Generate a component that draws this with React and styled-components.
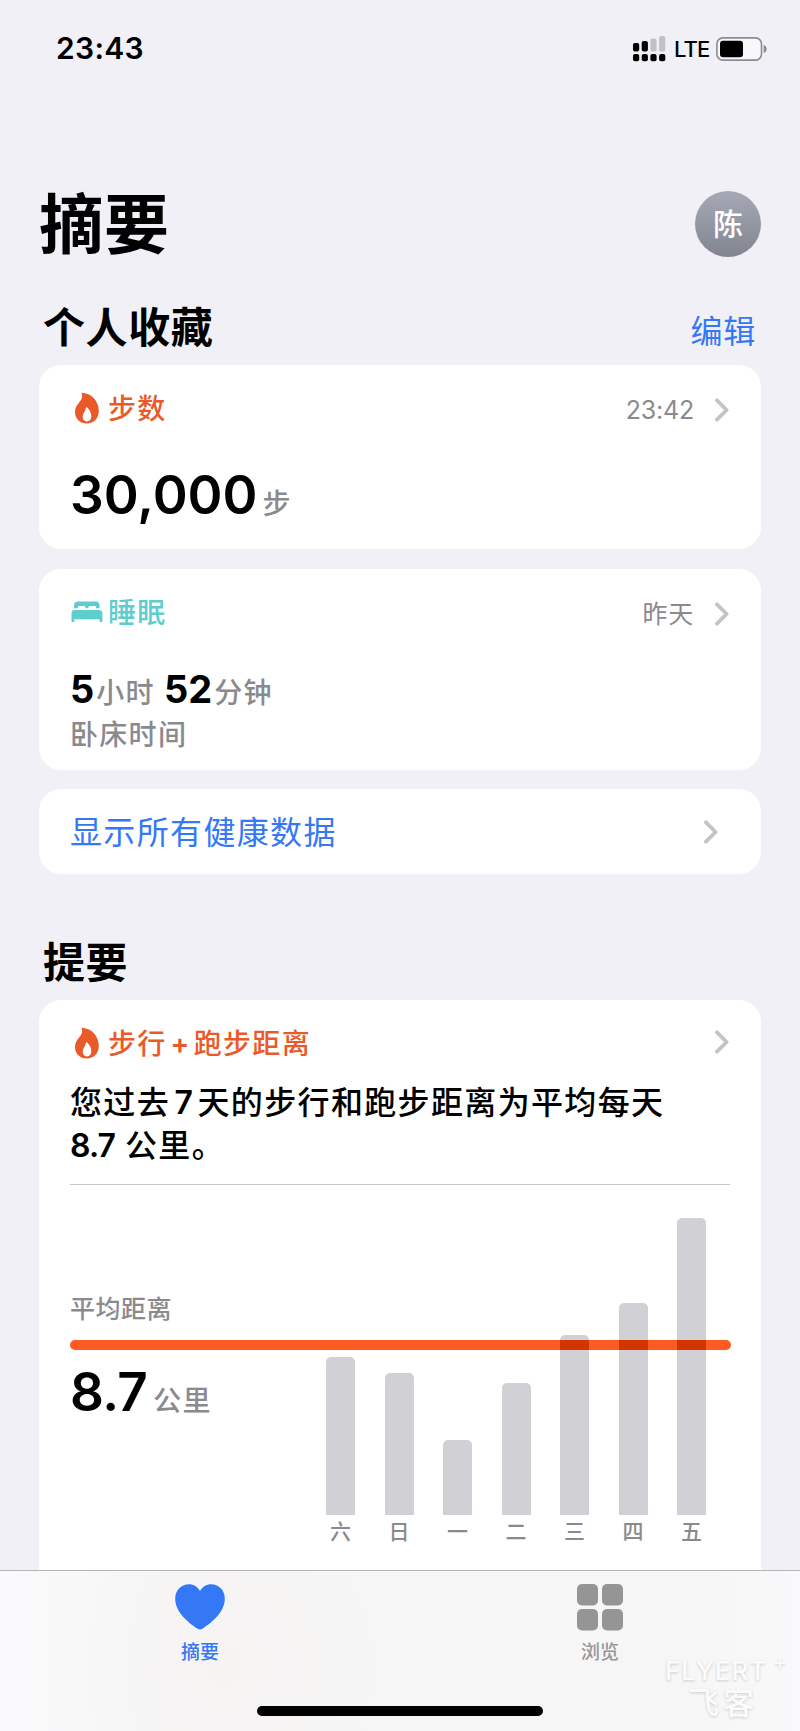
import React from 'react';
import styled, { createGlobalStyle } from 'styled-components';

const GlobalStyle = createGlobalStyle`
  * {
    box-sizing: border-box;
  }

  body {
    margin: 0;
    background: #f1f0f6;
    font-family: Inter, "Noto Sans CJK SC", sans-serif;
    color: #000;
  }
`

const Page = styled.div`
  position: relative;
  display: flex;
  flex-direction: column;
  width: 800px;
  height: 1731px;
  overflow: hidden;
`

const StatusBar = styled.div`
  display: flex;
  align-items: center;
  justify-content: space-between;
  height: 97px;
  padding: 0 33px 0 56px;
`

const Clock = styled.div`
  margin-top: -2px;
  font-size: 30px;
  font-weight: 600;
  letter-spacing: 0.3px;
`

const StatusIcons = styled.div`
  display: flex;
  align-items: center;

  svg {
    flex: none;
  }
`

const Network = styled.span`
  width: 49px;
  padding-left: 8px;
  font-size: 22px;
  font-weight: 500;
  letter-spacing: -0.9px;
`

const Content = styled.div`
  flex: 1;
  min-height: 0;
  padding: 0 39px;
  overflow: hidden;
`

const Header = styled.div`
  display: flex;
  align-items: center;
  justify-content: space-between;
  height: 66px;
  margin-top: 94px;
`

const Title = styled.h1`
  margin: 2px 0 0;
  font-size: 65px;
  font-weight: 700;
  line-height: 66px;
`

const Avatar = styled.div`
  width: 66px;
  height: 66px;
  border-radius: 50%;
  background: linear-gradient(#a5a9b5, #82858f);
  color: #fff;
  font-size: 30px;
  font-weight: 500;
  line-height: 67px;
  text-align: center;
`

const SectionRow = styled.div`
  display: flex;
  align-items: center;
  justify-content: space-between;
  height: 76px;
  margin-top: ${props => props.$gap}px;
  padding: 0 5px 0 4px;
`

const SectionTitle = styled.h2`
  margin: 2px 0 0;
  font-size: 42px;
  font-weight: 600;
  line-height: 60px;
  letter-spacing: 0.6px;
`

const EditLink = styled.a`
  margin-top: 4px;
  color: #3478f6;
  font-size: 32px;
  letter-spacing: 0.8px;
`

const Card = styled.section`
  height: ${props => props.$height}px;
  margin-bottom: ${props => props.$gap || 0}px;
  padding: 0 31px;
  border-radius: ${props => (props.$open ? '22px 22px 0 0' : '22px')};
  background: #fff;
`

const CardHeader = styled.div`
  display: flex;
  align-items: center;
  height: 86px;
`

const CardIcon = styled.span`
  display: flex;
  width: 38px;
`

const CardLabel = styled.span`
  flex: 1;
  margin-top: -2px;
  color: ${props => props.$color};
  font-size: 28px;
  font-weight: 500;
  letter-spacing: 1.3px;
`

const Plus = styled.span`
  margin: 0 3px 0 4px;
  font-weight: 600;
`

const CardTime = styled.span`
  margin: ${props => props.$shift}px 21px 0 0;
  color: #8a8a8e;
  font-size: 25px;
  letter-spacing: ${props => props.$spacing}px;
`

const ChevronSlot = styled.span`
  display: flex;
  margin: ${props => props.$shift || 0}px 1px 0 0;
`

const ValueRow = styled.div`
  display: flex;
  align-items: baseline;
  height: ${props => props.$height}px;
  margin-top: ${props => props.$top}px;
  line-height: ${props => props.$height}px;
`

const Value = styled.span`
  font-size: ${props => (props.$small ? 38 : 53)}px;
  font-weight: ${props => (props.$small ? 700 : 600)};
  letter-spacing: ${props => props.$spacing || 0}px;
`

const Unit = styled.span`
  margin: 0 ${props => props.$after || 0}px 0 ${props => props.$before}px;
  color: #8a8a8e;
  font-size: 28px;
  font-weight: 500;
  letter-spacing: 1.3px;
`

const Caption = styled.div`
  margin-top: 2px;
  color: #8a8a8e;
  font-size: 28px;
  font-weight: 500;
  line-height: 45px;
  letter-spacing: 1.3px;
`

const LinkCard = styled(Card)`
  display: flex;
  align-items: center;
  justify-content: space-between;
  padding-right: 42px;
`

const LinkText = styled.a`
  margin-top: -4px;
  color: #3478f6;
  font-size: 32px;
  letter-spacing: 1.35px;
`

const Summary = styled.p`
  height: 97px;
  margin: -5px 0 0;
  font-size: 32px;
  font-weight: 500;
  line-height: 43px;
  letter-spacing: 1.35px;
`

const SummaryNumber = styled.span`
  margin: 0 ${props => props.$gap || 0}px;
  font-weight: 600;
  letter-spacing: 0;
`

const SummaryValue = styled.span`
  font-weight: 600;
  letter-spacing: -0.9px;
`

const Divider = styled.hr`
  height: 1px;
  margin: 6px 0 0;
  border: 0;
  background: #c6c6c8;
`

const Chart = styled.div`
  position: relative;
  display: flex;
  justify-content: space-between;
  height: 385px;
`

const AverageLine = styled.div`
  position: absolute;
  top: 155px;
  left: 0;
  width: 661px;
  height: 10px;
  border-radius: 5px;
  background: #ff5a22;
`

const Average = styled.div`
  padding-top: 105px;
`

const AverageLabel = styled.div`
  color: #8a8a8e;
  font-size: 25px;
  font-weight: 500;
  line-height: 38px;
  letter-spacing: 0.5px;
`

const Bars = styled.div`
  position: relative;
  display: flex;
  align-items: flex-end;
  gap: 29.5px;
  height: 360px;
  margin-right: 24px;
`

const Day = styled.div`
  display: flex;
  flex-direction: column;
  align-items: center;
  width: 29px;
`

const Bar = styled.div`
  position: relative;
  width: 29px;
  border-radius: 5px 5px 0 0;
  background: #d1d0d5;
`

const BarOverlap = styled.div`
  position: absolute;
  bottom: 165px;
  left: 0;
  width: 100%;
  height: 10px;
  background: #d33500;
`

const DayLabel = styled.span`
  height: 30px;
  color: #8a8a8e;
  font-size: 21px;
  font-weight: 500;
  line-height: 34px;
`

const TabBar = styled.nav`
  display: grid;
  grid-template-columns: 1fr 1fr;
  height: 161px;
  padding-top: 13px;
  border-top: 1px solid #b5b5b7;
  background: radial-gradient(circle at 28% 60%, #f6f4f3, transparent 28%), linear-gradient(90deg, #fafafc, #f6f6f6 22%, #f6f6f6 85%, #f9f9fb);
`

const Tab = styled.a`
  display: flex;
  flex-direction: column;
  align-items: center;
  color: ${props => (props.$active ? '#3478f6' : '#959595')};
  font-size: 19px;
  font-weight: 500;
  line-height: 43px;

  svg {
    display: block;
  }
`

const HomeIndicator = styled.div`
  position: absolute;
  bottom: 15px;
  left: 257px;
  width: 286px;
  height: 10px;
  border-radius: 5px;
  background: #000;
`

const Watermark = styled.div`
  position: absolute;
  top: 1655px;
  left: 665px;
  color: #fbfbfb;
  text-shadow: 0 1px 3px rgba(0, 0, 0, 0.18);
`

const WatermarkName = styled.div`
  display: flex;
  font-size: 26px;
  font-weight: 500;
  line-height: 31px;
  letter-spacing: 1px;
`

const WatermarkPlus = styled.span`
  margin-left: 6px;
  font-size: 20px;
  line-height: 14px;
`

const WatermarkSub = styled.div`
  padding-left: 23px;
  font-size: 31px;
  font-weight: 500;
  line-height: 34px;
  letter-spacing: 4px;
`

const ORANGE = '#ea5a29';
const TEAL = '#5dcdce';

const BAR_BASE_TO_LINE = 165;

const days = [
  { label: '六', height: 158 },
  { label: '日', height: 142 },
  { label: '一', height: 75 },
  { label: '二', height: 132 },
  { label: '三', height: 180 },
  { label: '四', height: 212 },
  { label: '五', height: 297 }
];

const Signal = () => (
  <svg width="33" height="26" viewBox="0 0 33 26">
    <rect x="0" y="7" width="6.2" height="8.5" rx="2" />
    <rect x="8.7" y="5" width="6.2" height="10.5" rx="2" />
    <rect x="17.4" y="2.6" width="6.2" height="12.9" rx="2" fill="#c1c1c6" />
    <rect x="26.1" y="0" width="6.2" height="15.5" rx="2" fill="#c1c1c6" />
    {[0, 8.7, 17.4, 26.1].map(x => (
      <rect key={x} x={x} y="18" width="6.2" height="7.2" rx="2" />
    ))}
  </svg>
);

const Battery = () => (
  <svg width="52" height="24" viewBox="0 0 52 24">
    <rect x="1.9" y="0.9" width="44.6" height="22.2" rx="6" fill="#f8f8fb" stroke="#8c8c90" strokeWidth="1.6" />
    <rect x="5" y="3.7" width="23" height="16.6" rx="3" />
    <path d="M48.6 8 C52.6 9 52.6 15 48.6 16 Z" fill="#8c8c90" />
  </svg>
);

const Flame = () => (
  <svg width="34" height="32" viewBox="0 0 34 32">
    <path
      fillRule="evenodd"
      fill={ORANGE}
      d="M12.3 0.8 C11.8 0.8 11.6 1.3 11.8 1.8 C12.8 4.9 11.7 7.3 9.7 9.8 C7.2 12.8 5 15.6 5 20 C5 26.6 9.8 31.5 16.7 31.5 C23.9 31.5 28.8 26.6 28.8 18.8 C28.8 9.6 22 1.6 12.3 0.8 Z M16.8 29.4 C14.2 29.4 12.7 27.3 12.7 24.5 C12.7 21.4 15 20 15.8 16.3 C15.9 15.2 16.8 15 17.4 15.7 C19.6 17.8 21.3 21 21.3 24.2 C21.3 27.3 19.6 29.4 16.8 29.4 Z"
    />
  </svg>
);

const Bed = () => (
  <svg width="34" height="24" viewBox="0 0 34 24" fill={TEAL}>
    <path d="M4 8.3 V5.3 C4 2.6 5.5 1.4 8 1.4 H25.6 C28.1 1.4 29.5 2.6 29.5 5.3 V8.3 H26 V7.4 C26 6.4 25.4 5.9 24.4 5.9 H20 C18.9 5.9 18.4 6.4 18.4 7.4 V8.3 H15.4 V7.4 C15.4 6.4 14.9 5.9 13.8 5.9 H9.5 C8.5 5.9 7.9 6.4 7.9 7.4 V8.3 Z" />
    <path d="M1.5 13.5 C1.5 11 2.8 9.9 5.2 9.9 H28.7 C31 9.9 32.4 11 32.4 13.5 V21.1 C32.4 22.5 29.5 22.5 29.5 21.1 V19.2 H4.4 V21.1 C4.4 22.5 1.5 22.5 1.5 21.1 Z" />
  </svg>
);

const Chevron = ({ shift }) => (
  <ChevronSlot $shift={shift}>
    <svg width="14" height="24" viewBox="0 0 14 24" fill="none" stroke="#c4c4c6" strokeWidth="3.8" strokeLinecap="round" strokeLinejoin="round">
      <path d="M2 2.3 L11.6 12 L2 21.7" />
    </svg>
  </ChevronSlot>
);

const Heart = () => (
  <svg width="50" height="47" viewBox="0 0 50 47" fill="currentColor">
    <path d="M13.8 0.3 C18.8 0.3 22.7 3 25 7.1 C27.3 3 31.3 0.3 36.3 0.3 C44.2 0.3 49.8 6.7 49.8 14.8 C49.8 27.8 37.3 38.4 27.4 44.7 C25.8 45.7 24.2 45.7 22.6 44.7 C12.7 38.4 0.2 27.8 0.2 14.8 C0.2 6.7 5.9 0.3 13.8 0.3 Z" />
  </svg>
);

const Grid = () => (
  <svg width="46" height="47" viewBox="0 0 46 47" fill="currentColor">
    <rect x="0" y="0" width="21" height="21.5" rx="5" />
    <rect x="25" y="0" width="21" height="21.5" rx="5" />
    <rect x="0" y="25" width="21" height="21.5" rx="5" />
    <rect x="25" y="25" width="21" height="21.5" rx="5" />
  </svg>
);

const CardHead = ({ icon, label, color, time, shift }) => (
  <CardHeader>
    <CardIcon>{icon}</CardIcon>
    <CardLabel $color={color}>{label}</CardLabel>
    {time}
    <Chevron shift={shift} />
  </CardHeader>
);

const App = () => (
  <Page>
    <GlobalStyle />
    <StatusBar>
      <Clock>23:43</Clock>
      <StatusIcons>
        <Signal />
        <Network>LTE</Network>
        <Battery />
      </StatusIcons>
    </StatusBar>
    <Content>
      <Header>
        <Title>摘要</Title>
        <Avatar>陈</Avatar>
      </Header>
      <SectionRow $gap={32}>
        <SectionTitle>个人收藏</SectionTitle>
        <EditLink>编辑</EditLink>
      </SectionRow>
      <Card $height={184} $gap={20}>
        <CardHead
          icon={<Flame />}
          label="步数"
          color={ORANGE}
          time={<CardTime $shift={4} $spacing={-0.2}>23:42</CardTime>}
          shift={3}
        />
        <ValueRow $top={12} $height={64}>
          <Value>30,000</Value>
          <Unit $before={5}>步</Unit>
        </ValueRow>
      </Card>
      <Card $height={201} $gap={19}>
        <CardHead
          icon={<Bed />}
          label="睡眠"
          color={TEAL}
          time={<CardTime $shift={-1} $spacing={0.8}>昨天</CardTime>}
          shift={3}
        />
        <ValueRow $top={12} $height={44}>
          <Value $small>5</Value>
          <Unit $before={2} $after={9}>小时</Unit>
          <Value $small>52</Value>
          <Unit $before={2}>分钟</Unit>
        </ValueRow>
        <Caption>卧床时间</Caption>
      </Card>
      <LinkCard $height={85}>
        <LinkText>显示所有健康数据</LinkText>
        <Chevron />
      </LinkCard>
      <SectionRow $gap={50}>
        <SectionTitle>提要</SectionTitle>
      </SectionRow>
      <Card $height={600} $open>
        <CardHead
          icon={<Flame />}
          label={<>步行<Plus>+</Plus>跑步距离</>}
          color={ORANGE}
          shift={-2}
        />
        <Summary>
          您过去<SummaryNumber $gap={4.5}>7</SummaryNumber>天的步行和跑步距离为平均每天
          <br />
          <SummaryValue>8.7</SummaryValue> 公里。
        </Summary>
        <Divider />
        <Chart>
          <AverageLine />
          <Average>
            <AverageLabel>平均距离</AverageLabel>
            <ValueRow $top={32} $height={64}>
              <Value $spacing={-0.6}>8.7</Value>
              <Unit $before={6}>公里</Unit>
            </ValueRow>
          </Average>
          <Bars>
            {days.map(day => (
              <Day key={day.label}>
                <Bar style={{ height: day.height }}>
                  {day.height > BAR_BASE_TO_LINE && <BarOverlap />}
                </Bar>
                <DayLabel>{day.label}</DayLabel>
              </Day>
            ))}
          </Bars>
        </Chart>
      </Card>
    </Content>
    <TabBar>
      <Tab $active>
        <Heart />
        摘要
      </Tab>
      <Tab>
        <Grid />
        浏览
      </Tab>
    </TabBar>
    <HomeIndicator />
    <Watermark>
      <WatermarkName>
        FLYERT<WatermarkPlus>+</WatermarkPlus>
      </WatermarkName>
      <WatermarkSub>飞客</WatermarkSub>
    </Watermark>
  </Page>
);

export default App;
